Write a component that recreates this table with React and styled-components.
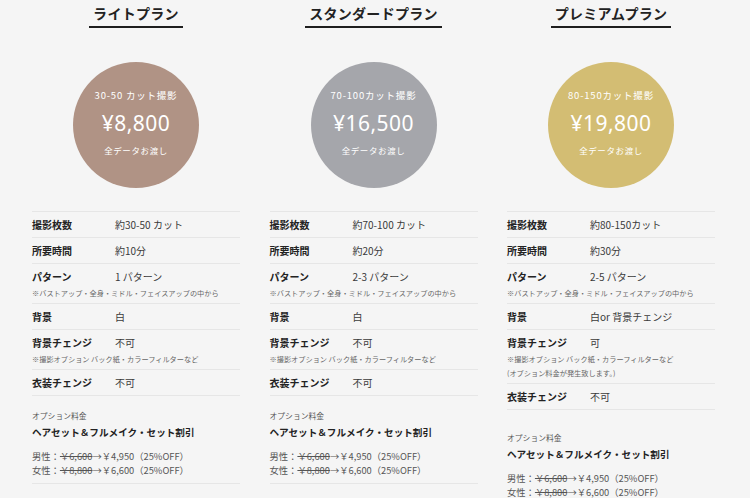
import React from 'react';
import styled, { createGlobalStyle } from 'styled-components';

const GlobalStyle = createGlobalStyle`
  html, body {
    margin: 0;
    padding: 0;
    background: #f5f5f5;
  }
  body {
    font-family: "Noto Sans CJK JP", "Noto Sans", sans-serif;
    color: #222;
  }
`;

const plans = [
  {
    name: 'ライトプラン',
    color: '#b09385',
    cuts: '30-50 カット撮影',
    price: '¥8,800',
    rows: [
      { label: '撮影枚数', value: '約30-50 カット' },
      { label: '所要時間', value: '約10分' },
      { label: 'パターン', value: '1 パターン', notes: ['※バストアップ・全身・ミドル・フェイスアップの中から'] },
      { label: '背景', value: '白' },
      { label: '背景チェンジ', value: '不可', notes: ['※撮影オプション バック紙・カラーフィルターなど'] },
      { label: '衣装チェンジ', value: '不可' },
    ],
  },
  {
    name: 'スタンダードプラン',
    color: '#a5a6ab',
    cuts: '70-100カット撮影',
    price: '¥16,500',
    rows: [
      { label: '撮影枚数', value: '約70-100 カット' },
      { label: '所要時間', value: '約20分' },
      { label: 'パターン', value: '2-3 パターン', notes: ['※バストアップ・全身・ミドル・フェイスアップの中から'] },
      { label: '背景', value: '白' },
      { label: '背景チェンジ', value: '不可', notes: ['※撮影オプション バック紙・カラーフィルターなど'] },
      { label: '衣装チェンジ', value: '不可' },
    ],
  },
  {
    name: 'プレミアムプラン',
    color: '#d3bd73',
    cuts: '80-150カット撮影',
    price: '¥19,800',
    spacious: true,
    rows: [
      { label: '撮影枚数', value: '約80-150カット' },
      { label: '所要時間', value: '約30分' },
      { label: 'パターン', value: '2-5 パターン', notes: ['※バストアップ・全身・ミドル・フェイスアップの中から'] },
      { label: '背景', value: '白or 背景チェンジ' },
      {
        label: '背景チェンジ',
        value: '可',
        notes: ['※撮影オプション バック紙・カラーフィルターなど', '(オプション料金が発生致します。)'],
      },
      { label: '衣装チェンジ', value: '不可' },
    ],
  },
];

const Page = styled.main`
  display: grid;
  grid-template-columns: repeat(3, 208px);
  column-gap: 29.5px;
  padding-left: 32px;
`;

const Plan = styled.section`
  display: flex;
  flex-direction: column;
`;

const Title = styled.h2`
  align-self: center;
  margin: 4px 0 0;
  padding: 0 4px 4px;
  font-size: 14px;
  line-height: 18px;
  font-weight: 700;
  letter-spacing: 0.3px;
  border-bottom: 2px solid #1e1e1e;
`;

const Circle = styled.div`
  align-self: center;
  margin-top: 34px;
  width: 126px;
  height: 126px;
  border-radius: 50%;
  background: ${(p) => p.$color};
  color: #fff;
  display: flex;
  flex-direction: column;
  align-items: center;
  justify-content: center;
  gap: 8px;
  padding-bottom: 6px;
  box-sizing: border-box;
`;

const Cuts = styled.div`
  font-size: 9.5px;
  line-height: 14px;
  letter-spacing: 0.8px;
`;

const Price = styled.div`
  font-family: "Noto Sans", "Noto Sans CJK JP", sans-serif;
  font-size: 21px;
  line-height: 26px;
  letter-spacing: 0.5px;
`;

const Handover = styled.div`
  font-size: 8.5px;
  line-height: 13px;
  letter-spacing: 0.6px;
`;

const Table = styled.div`
  margin-top: 23px;
  border-top: 1px solid #e6e6e6;
`;

const Row = styled.div`
  padding: 7px 0 ${(p) => (p.$hasNote ? '3px' : '6px')};
  border-bottom: 1px solid #e6e6e6;
`;

const RowMain = styled.div`
  display: grid;
  grid-template-columns: 83px 1fr;
  font-size: 10px;
  line-height: 12px;
`;

const Label = styled.span`
  font-weight: 700;
  color: #222;
`;

const Value = styled.span`
  color: #3a3a3a;
`;

const Notes = styled.div`
  margin-top: 3px;
`;

const Note = styled.div`
  font-size: 7.2px;
  line-height: 14px;
  color: #666;
  white-space: nowrap;
`;

const Option = styled.div`
  padding: ${(p) => (p.$spacious ? '23px' : '15px')} 0 6px;
  border-bottom: 1px solid #e6e6e6;
`;

const OptionCaption = styled.div`
  font-size: 7.8px;
  line-height: 10px;
  color: #555;
`;

const OptionTitle = styled.div`
  margin-top: 4px;
  font-size: 9.6px;
  line-height: 14px;
  font-weight: 700;
  color: #222;
  white-space: nowrap;
`;

const PriceLines = styled.div`
  margin-top: 10px;
`;

const PriceLine = styled.div`
  font-size: 9.3px;
  line-height: 14px;
  color: #555;
  white-space: nowrap;
`;

const Old = styled.s`
  color: #555;
`;

function PlanColumn({ plan }) {
  return (
    <Plan>
      <Title>{plan.name}</Title>
      <Circle $color={plan.color}>
        <Cuts>{plan.cuts}</Cuts>
        <Price>{plan.price}</Price>
        <Handover>全データお渡し</Handover>
      </Circle>
      <Table>
        {plan.rows.map((row) => (
          <Row key={row.label} $hasNote={!!row.notes}>
            <RowMain>
              <Label>{row.label}</Label>
              <Value>{row.value}</Value>
            </RowMain>
            {row.notes && (
              <Notes>
                {row.notes.map((n) => (
                  <Note key={n}>{n}</Note>
                ))}
              </Notes>
            )}
          </Row>
        ))}
      </Table>
      <Option $spacious={plan.spacious}>
        <OptionCaption>オプション料金</OptionCaption>
        <OptionTitle>ヘアセット＆フルメイク・セット割引</OptionTitle>
        <PriceLines>
          <PriceLine>
            男性：<Old>￥6,600</Old>→￥4,950（25%OFF）
          </PriceLine>
          <PriceLine>
            女性：<Old>￥8,800</Old>→￥6,600（25%OFF）
          </PriceLine>
        </PriceLines>
      </Option>
    </Plan>
  );
}

export default function App() {
  return (
    <>
      <GlobalStyle />
      <Page>
        {plans.map((plan) => (
          <PlanColumn key={plan.name} plan={plan} />
        ))}
      </Page>
    </>
  );
}
